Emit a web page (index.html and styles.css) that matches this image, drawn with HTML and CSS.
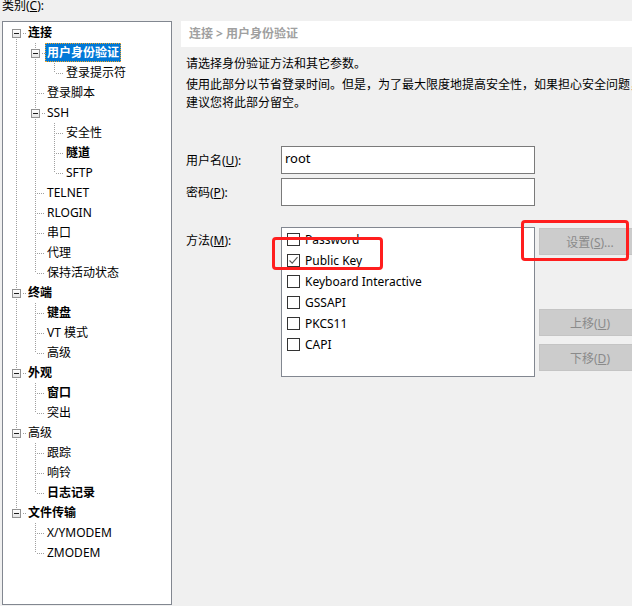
FILE: index.html
```html
<!DOCTYPE html>
<html lang="zh-CN">
<head>
    <meta charset="UTF-8">
    <title>会话选项 - 用户身份验证</title>
    <link rel="stylesheet" href="styles.css">
</head>
<body>
    <div class="window">
        <div class="category">
            <div class="cat-label">类别(<u>C</u>):</div>
            <div class="tree">
                <div class="row"><span class="g e1"><span class="box"></span></span><span class="lbl b">连接</span></div>
                <div class="row"><span class="g v"></span><span class="g e2"><span class="box"></span></span><span class="lbl b sel">用户身份验证</span></div>
                <div class="row"><span class="g v"></span><span class="g v"></span><span class="g l"></span><span class="lbl">登录提示符</span></div>
                <div class="row"><span class="g v"></span><span class="g t"></span><span class="lbl">登录脚本</span></div>
                <div class="row"><span class="g v"></span><span class="g e2"><span class="box"></span></span><span class="lbl">SSH</span></div>
                <div class="row"><span class="g v"></span><span class="g v"></span><span class="g t"></span><span class="lbl">安全性</span></div>
                <div class="row"><span class="g v"></span><span class="g v"></span><span class="g t"></span><span class="lbl b">隧道</span></div>
                <div class="row"><span class="g v"></span><span class="g v"></span><span class="g l"></span><span class="lbl">SFTP</span></div>
                <div class="row"><span class="g v"></span><span class="g t"></span><span class="lbl">TELNET</span></div>
                <div class="row"><span class="g v"></span><span class="g t"></span><span class="lbl">RLOGIN</span></div>
                <div class="row"><span class="g v"></span><span class="g t"></span><span class="lbl">串口</span></div>
                <div class="row"><span class="g v"></span><span class="g t"></span><span class="lbl">代理</span></div>
                <div class="row"><span class="g v"></span><span class="g l"></span><span class="lbl">保持活动状态</span></div>
                <div class="row"><span class="g e2"><span class="box"></span></span><span class="lbl b">终端</span></div>
                <div class="row"><span class="g v"></span><span class="g t"></span><span class="lbl b">键盘</span></div>
                <div class="row"><span class="g v"></span><span class="g t"></span><span class="lbl">VT 模式</span></div>
                <div class="row"><span class="g v"></span><span class="g l"></span><span class="lbl">高级</span></div>
                <div class="row"><span class="g e2"><span class="box"></span></span><span class="lbl b">外观</span></div>
                <div class="row"><span class="g v"></span><span class="g t"></span><span class="lbl b">窗口</span></div>
                <div class="row"><span class="g v"></span><span class="g l"></span><span class="lbl">突出</span></div>
                <div class="row"><span class="g e2"><span class="box"></span></span><span class="lbl">高级</span></div>
                <div class="row"><span class="g v"></span><span class="g t"></span><span class="lbl">跟踪</span></div>
                <div class="row"><span class="g v"></span><span class="g t"></span><span class="lbl">响铃</span></div>
                <div class="row"><span class="g v"></span><span class="g l"></span><span class="lbl b">日志记录</span></div>
                <div class="row"><span class="g e3"><span class="box"></span></span><span class="lbl b">文件传输</span></div>
                <div class="row"><span class="g"></span><span class="g t"></span><span class="lbl">X/YMODEM</span></div>
                <div class="row"><span class="g"></span><span class="g l"></span><span class="lbl">ZMODEM</span></div>
            </div>
        </div>

        <div class="page">
            <div class="crumb">连接 &gt; 用户身份验证</div>

            <div class="content">
                <p class="intro">请选择身份验证方法和其它参数。</p>
                <p class="note">使用此部分以节省登录时间。但是，为了最大限度地提高安全性，如果担心安全问题，建议您将此部分留空。</p>

                <div class="field field-user">
                    <label class="field-label">用户名(<u>U</u>):</label>
                    <div class="input">root</div>
                </div>
                <div class="field">
                    <label class="field-label">密码(<u>P</u>):</label>
                    <div class="input"></div>
                </div>

                <div class="field field-method">
                    <label class="field-label">方法(<u>M</u>):</label>
                    <div class="methods">
                        <div class="method"><span class="check"></span>Password</div>
                        <div class="method"><span class="check"><svg width="11" height="11" viewBox="0 0 11 11"><path d="M1.5 5.5 L4.2 8.2 L9.5 2.2" fill="none" stroke="#5a5a5a" stroke-width="1.1"/></svg></span>Public Key</div>
                        <div class="method"><span class="check"></span>Keyboard Interactive</div>
                        <div class="method"><span class="check"></span>GSSAPI</div>
                        <div class="method"><span class="check"></span>PKCS11</div>
                        <div class="method"><span class="check"></span>CAPI</div>
                    </div>
                    <div class="buttons">
                        <button class="btn" disabled>设置(<u>S</u>)...</button>
                        <button class="btn btn-up" disabled>上移(<u>U</u>)</button>
                        <button class="btn" disabled>下移(<u>D</u>)</button>
                    </div>
                </div>
            </div>
        </div>
    </div>

    <div class="mark mark-key"></div>
    <div class="mark mark-set"></div>
</body>
</html>
```

FILE: styles.css
```css
*{
    margin: 0;
    padding: 0;
    box-sizing: border-box;
}
body{
    position: relative;
    width: 632px;
    height: 606px;
    overflow: hidden;
    background-color: #f0f0f0;
    font-family: "Noto Sans", "Noto Sans CJK SC", sans-serif;
    font-size: 12px;
    color: #000;
}
.window{
    display: flex;
    gap: 9px;
}

/* left: category tree */
.category{
    width: 172px;
    flex: none;
}
.cat-label{
    line-height: 16px;
    margin-top: -2px;
    margin-left: 2px;
    height: 16px;
    margin-bottom: 7px;
}
.tree{
    margin-left: 2px;
    width: 170px;
    height: 584px;
    background-color: #fff;
    border: 1px solid #828790;
    padding: 1px 0 0 4px;
}
.row{
    display: flex;
    height: 20px;
    align-items: center;
}
.g{
    display: block;
    flex: none;
    width: 19px;
    height: 20px;
    background-repeat: no-repeat;
}
.v{
    background-image: repeating-linear-gradient(#a0a0a0 0 1px, transparent 1px 2px);
    background-position: 9px 0;
    background-size: 1px 20px;
}
.t{
    background-image: repeating-linear-gradient(#a0a0a0 0 1px, transparent 1px 2px),
                      repeating-linear-gradient(90deg, #a0a0a0 0 1px, transparent 1px 2px);
    background-position: 9px 0, 11px 10px;
    background-size: 1px 20px, 8px 1px;
}
.l{
    background-image: repeating-linear-gradient(#a0a0a0 0 1px, transparent 1px 2px),
                      repeating-linear-gradient(90deg, #a0a0a0 0 1px, transparent 1px 2px);
    background-position: 9px 0, 11px 10px;
    background-size: 1px 10px, 8px 1px;
}
.e1{
    background-image: repeating-linear-gradient(#a0a0a0 0 1px, transparent 1px 2px),
                      repeating-linear-gradient(90deg, #a0a0a0 0 1px, transparent 1px 2px);
    background-position: 9px 16px, 16px 10px;
    background-size: 1px 4px, 4px 1px;
}
.e2{
    background-image: repeating-linear-gradient(#a0a0a0 0 1px, transparent 1px 2px),
                      repeating-linear-gradient(#a0a0a0 0 1px, transparent 1px 2px),
                      repeating-linear-gradient(90deg, #a0a0a0 0 1px, transparent 1px 2px);
    background-position: 9px 0, 9px 16px, 16px 10px;
    background-size: 1px 5px, 1px 4px, 4px 1px;
}
.e3{
    background-image: repeating-linear-gradient(#a0a0a0 0 1px, transparent 1px 2px),
                      repeating-linear-gradient(90deg, #a0a0a0 0 1px, transparent 1px 2px);
    background-position: 9px 0, 16px 10px;
    background-size: 1px 5px, 4px 1px;
}
.box{
    display: block;
    width: 9px;
    height: 9px;
    margin: 6px 0 0 5px;
    border: 1px solid #919191;
    background: linear-gradient(#1e1e1e, #1e1e1e) center / 5px 1px no-repeat,
                linear-gradient(#ffffff, #e4e4e4);
}
.lbl{
    white-space: nowrap;
    line-height: 17px;
    padding: 0 1px;
    margin-top: -2px;
    border: 1px dotted transparent;
}
.lbl.b{
    font-weight: bold;
}
.lbl.sel{
    background-color: #0078d7;
    color: #fff;
    border-color: #f5a623;
}

/* right: settings page */
.page{
    flex: 1;
    padding-top: 21px;
}
.crumb{
    height: 26px;
    line-height: 26px;
    background-color: #fff;
    padding-left: 8px;
    color: #a0a0a0;
    font-weight: bold;
}
.content{
    padding-left: 5px;
}
.intro{
    line-height: 18px;
    margin-top: 8px;
}
.note{
    line-height: 18px;
    margin-top: 3px;
    width: 462px;
}
.field{
    display: flex;
    align-items: center;
    margin-top: 4px;
}
.field-user{
    margin-top: 34px;
}
.field-label{
    width: 95px;
    flex: none;
}
.input{
    width: 254px;
    height: 28px;
    background-color: #fff;
    border: 1px solid #7a7a7a;
    padding: 2px 3px;
    line-height: 18px;
    font-size: 13px;
}
.field-method{
    align-items: flex-start;
    margin-top: 21px;
}
.field-method .field-label{
    line-height: 18px;
    padding-top: 5px;
}
.methods{
    width: 254px;
    height: 150px;
    flex: none;
    background-color: #fff;
    border: 1px solid #828790;
    padding: 1px 0 0 5px;
}
.method{
    display: flex;
    align-items: center;
    gap: 5px;
    height: 21px;
}
.check{
    width: 13px;
    height: 13px;
    border: 1px solid #333;
    background-color: #fff;
    display: flex;
    align-items: center;
    justify-content: center;
}
.buttons{
    display: flex;
    flex-direction: column;
    margin-left: 4px;
    padding-top: 1px;
    gap: 8px;
}
.btn{
    width: 102px;
    height: 27px;
    background-color: #cccccc;
    border: 1px solid #c4c4c4;
    color: #8a8a8a;
    font-family: inherit;
    font-size: 12px;
}
.btn-up{
    margin-top: 46px;
}

/* red annotations drawn on top of the screenshot */
.mark{
    position: absolute;
    border: 3px solid #ff1e1e;
    border-radius: 4px;
}
.mark-key{
    left: 272px;
    top: 237px;
    width: 111px;
    height: 33px;
}
.mark-set{
    left: 521px;
    top: 220px;
    width: 108px;
    height: 41px;
}
```
